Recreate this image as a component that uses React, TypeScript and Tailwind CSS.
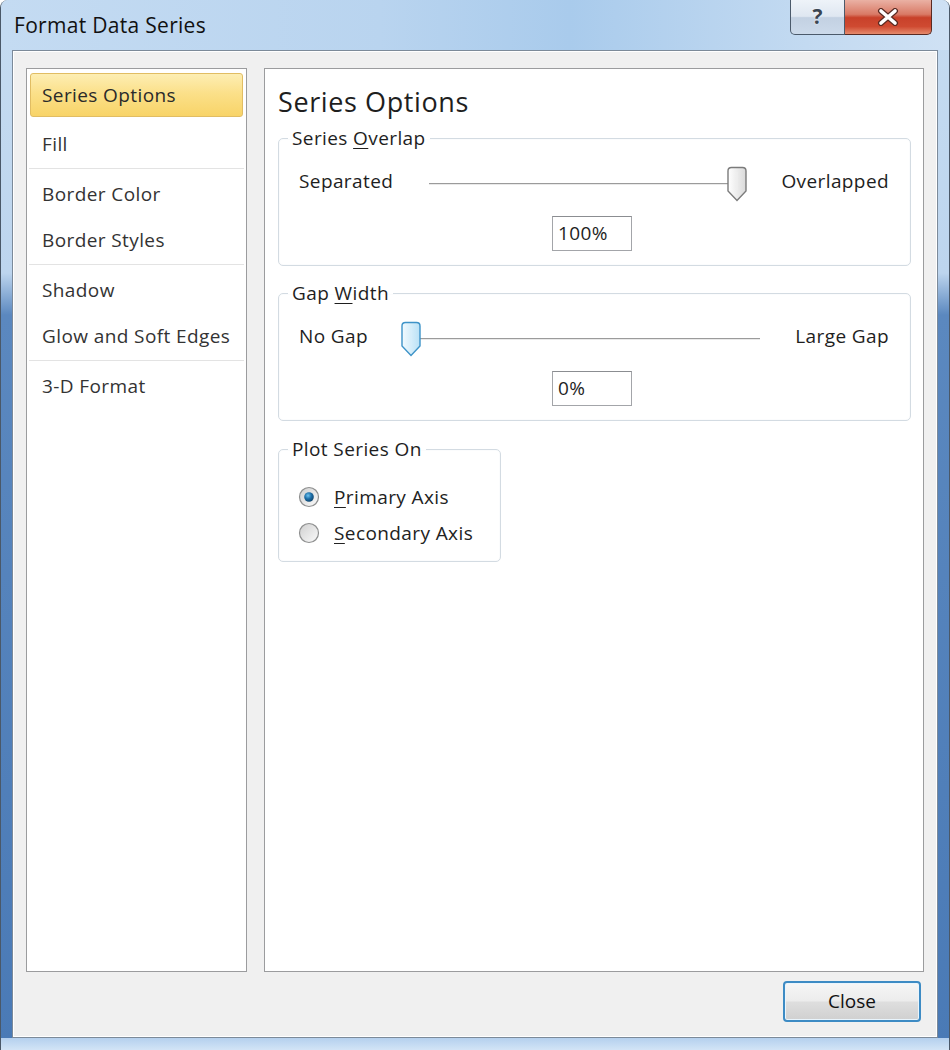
import type { ReactNode } from 'react'

const LIST: { label: string; active?: boolean }[][] = [
  [{ label: 'Series Options', active: true }],
  [{ label: 'Fill' }],
  [{ label: 'Border Color' }, { label: 'Border Styles' }],
  [{ label: 'Shadow' }, { label: 'Glow and Soft Edges' }],
  [{ label: '3-D Format' }],
]

function Group({ title, className, children }: { title: ReactNode; className: string; children: ReactNode }) {
  return (
    <fieldset className={`rounded-[5px] border border-[#d3dbe2] shadow-[inset_0_0_0_1px_#fbfcfd] ${className}`}>
      <legend className="ml-[9px] px-[4px] text-[19px] leading-[24px] tracking-[0.4px] text-[#1e1e1e]">{title}</legend>
      {children}
    </fieldset>
  )
}

function Thumb({ blue }: { blue?: boolean }) {
  const id = blue ? 'thumbBlue' : 'thumbGray'
  return (
    <svg width="22" height="36" viewBox="0 0 22 36">
      <defs>
        <linearGradient id={id} x1="0" y1="0" x2="1" y2="0">
          <stop offset="0" stopColor={blue ? '#f2fafe' : '#ffffff'} />
          <stop offset="1" stopColor={blue ? '#b9e1f6' : '#d9d9d9'} />
        </linearGradient>
      </defs>
      <path
        d="M2 5 Q2 1.5 5.5 1.5 H16.5 Q20 1.5 20 5 V25 L11 34.5 L2 25 Z"
        fill={`url(#${id})`}
        stroke={blue ? '#3d93c8' : '#7b7b7b'}
        strokeWidth="1.4"
      />
      <path d="M11 6 V24" stroke={blue ? '#d5eefb' : '#efefef'} strokeWidth="1" />
    </svg>
  )
}

function Slider({ at, width }: { at: 'start' | 'end'; width: number }) {
  return (
    <div className="relative h-[36px]" style={{ width }}>
      <div
        className={`absolute top-[17px] h-[2px] border-t border-[#9b9b9b] bg-[#e9e9e9] ${
          at === 'end' ? 'left-0 right-[11px]' : 'left-[9px] right-0'
        }`}
      />
      <div className={`absolute top-0 ${at === 'end' ? 'right-0' : 'left-0'}`}>
        <Thumb blue={at === 'start'} />
      </div>
    </div>
  )
}

function Radio({ checked, label }: { checked?: boolean; label: ReactNode }) {
  const id = checked ? 'radOn' : 'radOff'
  return (
    <div className="flex h-[36px] items-center">
      <svg width="22" height="22" viewBox="0 0 22 22" className="ml-[19px]">
        <defs>
          <linearGradient id={id} x1="0" y1="0" x2="1" y2="1">
            <stop offset="0" stopColor="#cfcfcf" />
            <stop offset="1" stopColor="#fbfbfb" />
          </linearGradient>
          <radialGradient id="dot" cx="0.4" cy="0.35" r="0.7">
            <stop offset="0" stopColor="#6fc3ef" />
            <stop offset="0.5" stopColor="#1d6fa8" />
            <stop offset="1" stopColor="#0d3f66" />
          </radialGradient>
        </defs>
        <circle cx="11" cy="11" r="9.5" fill={`url(#${id})`} stroke="#8e8f8f" strokeWidth="1.2" />
        {checked && <circle cx="11" cy="11" r="4.8" fill="url(#dot)" />}
      </svg>
      <span className="ml-[14px] text-[19px] tracking-[0.4px] text-[#222]">{label}</span>
    </div>
  )
}

function ValueBox({ value }: { value: string }) {
  return (
    <div className="ml-[273px] flex h-[35px] w-[80px] items-center border border-[#a3a5a9] border-t-[#8b8d91] bg-white pl-[5px] text-[19px] tracking-[0.4px] text-[#1e1e1e]">
      {value}
    </div>
  )
}

export default function App() {
  return (
    <div className="relative h-[1050px] w-[950px] overflow-hidden rounded-t-[8px] border-x border-[#4a5868] bg-[linear-gradient(to_bottom,#c6dcf1_0%,#bdd5ee_26%,#5b88bf_30%,#4a7ab6_100%)] font-['Open_Sans','Noto_Sans',sans-serif]">
      {/* title bar */}
      <div className="flex h-[50px] justify-between bg-[linear-gradient(to_right,#c4dbf2_0%,#b9d4ef_40%,#a9cbec_60%,#c3daf1_85%,#cfe1f4_100%)]">
        <div className="ml-[13px] flex items-center pt-[2px] text-[21px] tracking-[0.3px] text-[#111]">Format Data Series</div>
        <div className="mr-[17px] flex h-[35px]">
          <div className="flex w-[55px] items-center justify-center rounded-bl-[5px] border border-t-0 border-[#4b5a6b] bg-[linear-gradient(to_bottom,#eef3f9_0%,#dfe7f1_48%,#c3d1e2_52%,#ccdaea_100%)] text-[21px] font-bold text-[#3a4552] [text-shadow:0_0_2px_#fff]">
            ?
          </div>
          <div className="flex w-[87px] items-center justify-center rounded-br-[5px] border border-l-0 border-t-0 border-[#5a2a22] bg-[linear-gradient(to_bottom,#eab1a4_0%,#d97a66_42%,#c8412a_52%,#cf4a31_78%,#e58a6c_100%)]">
            <svg width="22" height="18" viewBox="0 0 22 18">
              <path d="M4 3 L18 15 M18 3 L4 15" stroke="#5a2a22" strokeWidth="6" strokeLinecap="round" />
              <path d="M4 3 L18 15 M18 3 L4 15" stroke="#ffffff" strokeWidth="3.6" strokeLinecap="round" />
            </svg>
          </div>
        </div>
      </div>

      {/* body */}
      <div className="mx-[11px] flex h-[988px] flex-col border border-[#7c8a99] bg-[#f0f0f0] shadow-[inset_0_0_0_1px_#ffffff]">
        <div className="mx-[13px] mt-[17px] flex h-[904px] gap-[17px]">
          {/* left list */}
          <div className="w-[221px] border border-[#9b9c9e] bg-white pt-[4px]">
            {LIST.map((group, gi) => (
              <div key={gi}>
                {group.map((item) =>
                  item.active ? (
                    <div
                      key={item.label}
                      className="mx-[3px] flex h-[44px] items-center rounded-[3px] border border-[#e1bd63] bg-[linear-gradient(to_bottom,#fdeeb3_0%,#fbe08a_45%,#f8d468_100%)] pl-[11px] text-[19px] tracking-[0.4px] text-[#2a2a2a]"
                    >
                      {item.label}
                    </div>
                  ) : (
                    <div key={item.label} className="flex h-[46px] items-center pl-[15px] text-[19px] tracking-[0.4px] text-[#333]">
                      {item.label}
                    </div>
                  ),
                )}
                {gi < LIST.length - 1 && (
                  <div className="flex h-[4px] items-start px-[2px] pt-[1px]">
                    <div className={`h-px w-full ${gi === 0 ? 'bg-transparent' : 'bg-[#e3e3e3]'}`} />
                  </div>
                )}
              </div>
            ))}
          </div>

          {/* right panel */}
          <div className="flex-1 border border-[#9b9c9e] bg-white pl-[13px] pr-[12px]">
            <div className="mt-[15px] h-[36px] text-[27px] leading-[36px] tracking-[0.6px] text-[#1e1e1e]">Series Options</div>

            <Group
              className="mt-[6px] h-[140px]"
              title={
                <>
                  Series <span className="underline underline-offset-[3px]">O</span>verlap
                </>
              }
            >
              <div className="mt-[16px] flex items-center pl-[20px] pr-[21px] text-[19px] tracking-[0.4px] text-[#1e1e1e]">
                <div className="w-[130px] pb-[6px]">Separated</div>
                <Slider at="end" width={319} />
                <div className="ml-auto pb-[6px]">Overlapped</div>
              </div>
              <div className="mt-[14px]">
                <ValueBox value="100%" />
              </div>
            </Group>

            <Group
              className="mt-[15px] h-[140px]"
              title={
                <>
                  Gap <span className="underline underline-offset-[3px]">W</span>idth
                </>
              }
            >
              <div className="mt-[16px] flex items-center pl-[20px] pr-[21px] text-[19px] tracking-[0.4px] text-[#1e1e1e]">
                <div className="w-[101px] pb-[6px]">No Gap</div>
                <Slider at="start" width={360} />
                <div className="ml-auto pb-[6px]">Large Gap</div>
              </div>
              <div className="mt-[14px]">
                <ValueBox value="0%" />
              </div>
            </Group>

            <Group className="mt-[16px] h-[125px] w-[223px]" title="Plot Series On">
              <div className="mt-[18px]">
                <Radio
                  checked
                  label={
                    <>
                      <span className="underline underline-offset-[3px]">P</span>rimary Axis
                    </>
                  }
                />
                <Radio
                  label={
                    <>
                      <span className="underline underline-offset-[3px]">S</span>econdary Axis
                    </>
                  }
                />
              </div>
            </Group>
          </div>
        </div>

        {/* footer */}
        <div className="mr-[16px] mt-[9px] flex justify-end">
          <button className="h-[41px] w-[138px] rounded-[4px] border-2 border-[#3d8bc4] bg-[linear-gradient(to_bottom,#f6f6f6_0%,#ececec_48%,#dedede_52%,#d0d0d0_100%)] text-[19px] text-[#111] shadow-[inset_0_0_0_1px_#e9f5fd]">
            Close
          </button>
        </div>
      </div>

      {/* bottom frame */}
      <div className="h-[12px] bg-[linear-gradient(to_bottom,#b4d0ee,#d2e4f6)]" />
    </div>
  )
}
